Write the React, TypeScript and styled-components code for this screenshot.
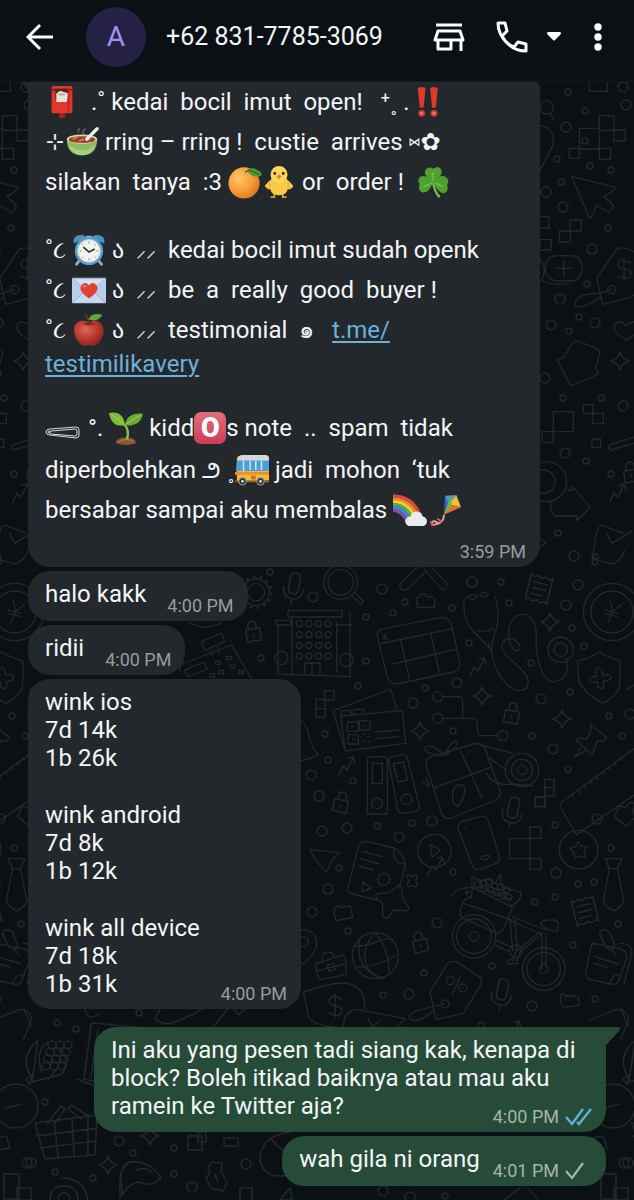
import React from "react";
import styled, { createGlobalStyle } from "styled-components";

const Global = createGlobalStyle`
  * { box-sizing: border-box; }
  body {
    margin: 0;
    background: #0b1014;
    color: #f3f5f7;
    font-family: Roboto, "Noto Sans", "DejaVu Sans", sans-serif;
  }
`;

const Screen = styled.div`
  display: flex;
  flex-direction: column;
  min-height: 100vh;
`;

const Header = styled.header`
  display: flex;
  align-items: center;
  height: 82px;
  padding: 0 4px 8px 20px;
  background: #0b1014;
  border-bottom: 1px solid #14191d;
`;

const IconButton = styled.button<{ $w: number }>`
  display: flex;
  align-items: center;
  justify-content: center;
  width: ${(p) => p.$w}px;
  height: 44px;
  padding: 0;
  border: 0;
  background: none;
  color: #fbfcfd;
  cursor: pointer;
`;

const Avatar = styled.div`
  display: flex;
  align-items: center;
  justify-content: center;
  width: 60px;
  height: 60px;
  margin: 0 20px 0 26px;
  border-radius: 50%;
  background: #252144;
  color: #a391f0;
  font-size: 28px;
  font-weight: 400;
`;

const Title = styled.h1`
  flex: 1;
  margin: 0;
  font-size: 25px;
  font-weight: 400;
  line-height: 32px;
  white-space: nowrap;
`;

const Chat = styled.main`
  position: relative;
  flex: 1;
  display: flex;
  flex-direction: column;
  gap: 4px;
  padding: 0 28px 12px;
  overflow: hidden;
`;

const Wallpaper = styled.svg`
  position: absolute;
  inset: 0;
  width: 100%;
  height: 100%;
  color: #24282c;
`;

const Bubble = styled.article<{ $out?: boolean; $wide?: boolean; $cut?: boolean; $spaced?: boolean }>`
  position: relative;
  display: flex;
  flex-wrap: wrap;
  align-self: ${(p) => (p.$out ? "flex-end" : "flex-start")};
  justify-content: flex-end;
  width: ${(p) => (p.$wide ? "100%" : "auto")};
  max-width: 512px;
  margin-top: ${(p) => (p.$spaced ? 14 : 0)}px;
  padding: ${(p) => (p.$cut ? "0 14px 4px 17px" : "9px 14px 4px 17px")};
  border-radius: ${(p) => (p.$cut ? "0 6px 22px 22px" : p.$spaced ? "22px 0 22px 22px" : "22px")};
  background: ${(p) => (p.$out ? "#274b39" : "#23282c")};
`;

const Body = styled.div<{ $fill?: boolean; $list?: boolean }>`
  display: flex;
  flex-direction: column;
  flex: ${(p) => (p.$fill ? "1 0 100%" : "0 1 auto")};
  gap: 29px;
  padding-bottom: ${(p) => (p.$list ? 7 : 0)}px;
  font-size: 24px;
  line-height: 28px;
`;

const Text = styled.p`
  margin: 0;
  white-space: pre-line;
`;

const Rows = styled.div`
  display: flex;
  flex-direction: column;
  flex: 1 0 100%;
  font-size: 24px;
`;

const Row = styled.div<{ $h?: number }>`
  display: flex;
  align-items: center;
  height: ${(p) => p.$h ?? 40}px;
  line-height: 28px;
  white-space: pre;
`;

const Link = styled.a`
  color: #6bb1dc;
  text-decoration: underline;
  text-decoration-thickness: 2px;
  text-underline-offset: 3px;
`;

const Meta = styled.span<{ $out?: boolean; $pull?: number }>`
  display: flex;
  float: right;
  align-items: center;
  align-self: flex-end;
  gap: 6px;
  height: 22px;
  margin-left: ${(p) => (p.$out ? 13 : 21)}px;
  margin-top: ${(p) => p.$pull ?? 0}px;
  color: ${(p) => (p.$out ? "#a5b5ab" : "#989c9f")};
  font-size: 18px;
  line-height: 22px;
  white-space: nowrap;
`;

const Tail = styled.svg<{ $out?: boolean }>`
  position: absolute;
  top: 0;
  ${(p) => (p.$out ? "left: 100%;" : "right: 100%;")}
  color: ${(p) => (p.$out ? "#274b39" : "#23282c")};
`;

const Pic = styled.svg`
  flex: none;
  width: 34px;
  height: 34px;
`;

const Sym = styled.span<{ $w: number; $size?: number }>`
  flex: none;
  width: ${(p) => p.$w}px;
  font-size: ${(p) => p.$size ?? 24}px;
  text-align: center;
`;

const Emoji = ({ label, children }: { label: string; children: React.ReactNode }) => (
  <Pic viewBox="0 0 36 36" role="img" aria-label={label}>
    {children}
  </Pic>
);

const Postbox = () => (
  <Emoji label="postbox">
    <rect x="15" y="28" width="6" height="7" rx="1" fill="#a32017" />
    <path d="M7 3q0-2 2-2h18q2 0 2 2v25q0 2-2 2H9q-2 0-2-2z" fill="#e2372b" />
    <path d="M7 5h22" stroke="#941b14" strokeWidth="2" />
    <rect x="11" y="4" width="14" height="11" fill="#4a2723" />
    <path d="M12 9l4-3 9 3-2 9H12z" fill="#e7e3da" />
    <path d="M14 10h7" stroke="#b7a99a" strokeWidth="2" />
    <path d="M25 4v25" stroke="#b92a21" strokeWidth="2" />
  </Emoji>
);

const Soup = () => (
  <Emoji label="bowl">
    <path d="M15 8q-3-3 1-4m4 6q-3-4 2-6" stroke="#59636b" strokeWidth="1.5" fill="none" />
    <path d="M2 15q0 17 16 17t16-17z" fill="#8cbb67" />
    <path d="M4 20q3 12 14 12t14-12q-6 7-14 7T4 20z" fill="#a8d27c" />
    <ellipse cx="18" cy="15" rx="16" ry="5" fill="#c6dfab" />
    <ellipse cx="18" cy="15.500" rx="14" ry="3.600" fill="#a63a2a" />
    <path d="M8 15l5-2m2 4l5-2m3 1l4-1" stroke="#d9784c" strokeWidth="2" />
    <path d="M23 15l11-11" stroke="#f0efec" strokeWidth="3.500" strokeLinecap="round" />
  </Emoji>
);

const Tangerine = () => (
  <Emoji label="tangerine">
    <defs>
      <radialGradient id="tang" cx=".35" cy=".35" r=".75">
        <stop offset="0" stopColor="#ffc76b" />
        <stop offset=".6" stopColor="#f69a33" />
        <stop offset="1" stopColor="#d9711c" />
      </radialGradient>
    </defs>
    <circle cx="17" cy="19" r="16.500" fill="url(#tang)" />
    <path d="M20 6q6-6 15 2 1 3-1 4-8 2-14-6z" fill="#4f9a35" />
    <path d="M18 8l4-3 11 5" stroke="#2f6d22" strokeWidth="1.500" fill="none" />
  </Emoji>
);

const Chick = () => (
  <Emoji label="chick">
    <path d="M13 30v4h-4m13-4v4h4" stroke="#dd9433" strokeWidth="2" fill="none" />
    <path d="M11 14q-5 4-8 8 2 4 6 4 1 6 9 6t9-6q5 0 6-4-4-5-8-8z" fill="#f8ca45" />
    <circle cx="18" cy="10" r="9" fill="#fbd65a" />
    <path d="M8 19q1 6-2 5m22-5q-1 6 2 5" stroke="#dfa332" fill="none" />
    <circle cx="13.500" cy="9" r="1.500" fill="#3a2413" />
    <circle cx="22.500" cy="9" r="1.500" fill="#3a2413" />
    <path d="M15 12l3-2 3 2-3 3z" fill="#e8822a" />
  </Emoji>
);

const Clover = () => (
  <Emoji label="shamrock">
    <path d="M18 17q1 11 7 17" stroke="#7fb650" strokeWidth="2.500" fill="none" />
    <g fill="#4ea02f">
      <path d="M18 18Q7 11 10 5q4-4 8-1 6-4 9 1 2 6-9 13z" />
      <path d="M18 18Q9 9 4 13q-3 4 0 7-3 7 3 9 7 1 11-11z" />
      <path d="M18 18q8-9 14-5 4 4 1 8 2 7-3 9-7 0-12-12z" />
    </g>
    <path d="M18 17V8m-1 11l-9 4m12-4l9 4" stroke="#7dc653" strokeWidth="1.200" />
  </Emoji>
);

const Bangs = () => (
  <Emoji label="double exclamation">
    <g fill="#dc3a2c">
      <path d="M2 4q0-2 4-2t4 2L8 24H4zM15 4q0-2 4-2t4 2l-2 20h-4z" />
      <circle cx="6" cy="30" r="3.600" />
      <circle cx="19" cy="30" r="3.600" />
    </g>
    <g fill="#ee8479">
      <circle cx="6" cy="30" r="1.500" />
      <circle cx="19" cy="30" r="1.500" />
    </g>
  </Emoji>
);

const Clock = () => (
  <Emoji label="alarm clock">
    <path d="M8 29l-4 5m24-5l4 5" stroke="#9aa9b3" strokeWidth="3" />
    <path d="M2 11Q0 2 10 2q4 0 5 3zM34 11q2-9-8-9-4 0-5 3z" fill="#4a91c4" />
    <path d="M15 4h6" stroke="#a9bac5" strokeWidth="2" />
    <circle cx="18" cy="19" r="15" fill="#5b9ccb" />
    <circle cx="18" cy="19" r="12" fill="#f2f1ea" stroke="#c1d5e0" />
    <path d="M12 15l6 5 6-3" stroke="#343434" strokeWidth="1.800" fill="none" />
    <path d="M18 9v2m0 16v2M8 19h2m16 0h2M11 12l1 1m12 12l1 1M25 12l-1 1M12 25l-1 1" stroke="#777" />
  </Emoji>
);

const LoveLetter = () => (
  <Emoji label="love letter">
    <rect x="0" y="5" width="36" height="27" rx="1" fill="#b8ceea" />
    <path d="M1 31l14-13h6l14 13" fill="#c8daef" stroke="#93afd3" />
    <path d="M1 6l17 15L35 6z" fill="#d5e2f3" stroke="#99b4d8" />
    <path d="M18 27Q6 19 10 13q4-5 8 0 4-5 8 0 4 6-8 14z" fill="#df4135" />
    <path d="M12 15q1-2 3-1" stroke="#f0958c" strokeWidth="1.500" fill="none" />
  </Emoji>
);

const Apple = () => (
  <Emoji label="apple">
    <defs>
      <radialGradient id="apple" cx=".4" cy=".35" r=".7">
        <stop offset="0" stopColor="#db6a54" />
        <stop offset=".55" stopColor="#ba382e" />
        <stop offset="1" stopColor="#82201d" />
      </radialGradient>
    </defs>
    <path d="M18 10Q8 5 3 13q-3 9 4 18 5 6 11 3 7 3 12-4 6-9 2-17-5-8-14-3z" fill="url(#apple)" />
    <path d="M11 11q7 4 14 0-7-2-14 0z" fill="#7b2821" />
    <path d="M18 12q-1-7-4-10" stroke="#5e3921" strokeWidth="2" fill="none" />
    <path d="M17 7q5-8 15-5-4 8-15 5z" fill="#62a63e" />
  </Emoji>
);

const Sprout = () => (
  <Emoji label="seedling">
    <path d="M7 34q1-6 11-6t11 6q-11 4-22 0z" fill="#8b5736" />
    <path d="M9 33q8-5 17-1" stroke="#b77b4e" fill="none" />
    <path d="M19 30q3-10-3-16" stroke="#8abf48" strokeWidth="2.500" fill="none" />
    <path d="M17 15Q3 18 0 2q15-3 17 13z" fill="#7ebb3b" />
    <path d="M17 15q2-14 19-12-3 14-19 12z" fill="#69aa32" />
    <path d="M2 3l14 11M34 4L18 14" stroke="#a4d75d" />
  </Emoji>
);

const ButtonO = styled.span`
  flex: none;
  width: 32px;
  height: 32px;
  border-radius: 7px;
  background: linear-gradient(#e0707c, #cf3c54);
  color: #ffffff;
  font-weight: 900;
  font-size: 27px;
  line-height: 32px;
  text-align: center;
`;

const Bus = () => (
  <Emoji label="bus">
    <path d="M2 30V7q0-4 4-4h27q3 0 3 4v22z" fill="#f2bb3a" />
    <path d="M3 9V6q1-4 5-4h24q4 0 4 4v3z" fill="#d3d8da" />
    <path d="M2 8h34v11H1z" fill="#4ca0d7" />
    <path d="M9 8v11m7-11v10m6-10v10m6-10v10" stroke="#d4e7ef" strokeWidth="1.500" />
    <path d="M0 20h36v3H0z" fill="#ef8d2c" />
    <path d="M0 29h36v2H0z" fill="#9b631f" />
    <rect x="17" y="24" width="5" height="4" fill="#b47a20" />
    <g fill="#343536" stroke="#aaa">
      <circle cx="8" cy="30" r="4" />
      <circle cx="27" cy="30" r="4" />
    </g>
    <circle cx="8" cy="30" r="1.500" fill="#ddd" />
    <circle cx="27" cy="30" r="1.500" fill="#ddd" />
  </Emoji>
);

const Rainbow = () => (
  <Emoji label="rainbow">
    <g fill="none" strokeWidth="3.200">
      <path d="M0 3q25 1 31 28" stroke="#e34632" />
      <path d="M0 6q22 1 28 25" stroke="#f08a30" />
      <path d="M0 9q19 1 25 22" stroke="#f4d13c" />
      <path d="M0 12q16 1 22 19" stroke="#57af45" />
      <path d="M0 15q13 1 19 16" stroke="#3e8ed6" />
      <path d="M0 18q10 1 16 14" stroke="#864eb4" />
    </g>
    <g fill="#e8ecf1">
      <circle cx="18" cy="30" r="5" />
      <circle cx="25" cy="26" r="6.500" />
      <circle cx="31" cy="30" r="5" />
      <rect x="16" y="29" width="17" height="6" rx="3" />
    </g>
  </Emoji>
);

const Kite = () => (
  <Emoji label="kite">
    <path d="M19 3L31 2 22 12z" fill="#3f9ad0" />
    <path d="M31 2l5 13-14-3z" fill="#f1bd38" />
    <path d="M19 3l3 9-4 11z" fill="#3564c4" />
    <path d="M26 2l-8 21 8-10z" fill="#69b946" />
    <path d="M36 15L18 23l4-11z" fill="#e9702d" />
    <path d="M22 12l-4 11 9-10z" fill="#69b946" />
    <path d="M18 23q0 8-8 10-6 2-5-2 4-3 7 2" stroke="#e0ad87" strokeWidth="2" fill="none" />
    <path d="M4 30l2 5m5-8l5 4" stroke="#d5536d" strokeWidth="2" />
  </Emoji>
);

const HairClip = () => (
  <svg width="37" height="28" viewBox="0 0 37 28" fill="none" stroke="#d8dadb" aria-hidden="true">
    <path d="M5 15l26-2q3 0 3 3v5q0 3-3 3L5 21q-4 0-4-3t4-3z" />
    <path d="M6 17l24-2q2 0 2 2v3q0 2-2 2L6 20q-3-1 0-3z" />
    <circle cx="4" cy="18" r="1" />
  </svg>
);

const Ticks = ({ read }: { read?: boolean }) => (
  <svg width="27" height="20" viewBox="0 0 27 20" fill="none" stroke={read ? "#63b2dc" : "#a5b5ab"} strokeWidth="2.200" aria-label={read ? "Read" : "Sent"}>
    <path d="M1 10l6 7L18 2" />
    {read && <path d="M12 15l2 2L26 2" />}
  </svg>
);

const SMALL = [
  [366, 617], [393, 613], [405, 602], [452, 608], [501, 582], [509, 603], [469, 643], [366, 661], [358, 686],
  [425, 688], [453, 731], [531, 663], [572, 628], [584, 646], [570, 692], [609, 716], [622, 736], [532, 736],
  [568, 769], [325, 734], [328, 760], [353, 781], [377, 826], [412, 823], [339, 868], [348, 931], [453, 872],
  [535, 902], [555, 897], [578, 884], [594, 882], [555, 825], [611, 848], [618, 924], [573, 945], [492, 966],
  [424, 973], [383, 995], [595, 999], [568, 92], [585, 111], [557, 159], [590, 166], [611, 170], [561, 182],
  [608, 228], [587, 284], [579, 317], [569, 331], [563, 398], [601, 398], [586, 461], [611, 474], [585, 141],
  [595, 557], [558, 533], [261, 658], [57, 1023], [76, 1029], [45, 1102], [174, 1148], [133, 1153], [55, 1172],
  [93, 1178], [174, 1174], [270, 572], [139, 1013], [481, 1025], [595, 562], [445, 1196],
];
const MEDIUM = [
  [313, 597], [382, 589], [472, 582], [578, 585], [566, 605], [413, 703], [457, 683], [553, 749], [311, 775],
  [630, 714], [319, 796], [322, 831], [347, 828], [399, 837], [432, 821], [597, 819], [556, 873], [328, 889],
  [312, 912], [437, 923], [409, 994], [532, 1006], [626, 105], [566, 127], [546, 192], [563, 207], [592, 249],
  [560, 299], [595, 323], [551, 325], [545, 378], [623, 406], [565, 453], [574, 556], [623, 87], [119, 1141],
  [31, 1163], [192, 1187], [246, 1164], [383, 1191], [624, 1163], [541, 699], [410, 1197],
];

const Sparkle = ({ x, y }: { x: number; y: number }) => (
  <path transform={`translate(${x} ${y})`} d="M0-9Q2-2 9 0 2 2 0 9-2 2-9 0-2-2 0-9z" />
);
const Lock = ({ x, y, r }: { x: number; y: number; r: number }) => (
  <path transform={`translate(${x} ${y}) rotate(${r})`} d="M-7-3H7V9H-7zM-4-3v-4q0-4 4-4t4 4v4M0 2v2" />
);
const Mic = ({ x, y, r }: { x: number; y: number; r: number }) => (
  <path transform={`translate(${x} ${y}) rotate(${r})`} d="M-5-8q0-5 5-5t5 5V3q0 5-5 5t-5-5zM-10 2q0 11 10 11T10 2M0 13v5" />
);
const Receipt = ({ x, y, r }: { x: number; y: number; r: number }) => (
  <path transform={`translate(${x} ${y}) rotate(${r})`} d="M-11-13l3 2 4-2 4 2 4-2 4 2 3-2V13l-3-2-4 2-4-2-4 2-4-2-3 2zM-7-6H7M-7 0H7M-7 6H5" />
);
const Zig = ({ x, y }: { x: number; y: number }) => <path transform={`translate(${x} ${y})`} d="M-7 9l4-9 4 4 6-12m-5 0l5-1 2 6" />;

const Doodles = () => (
  <g id="doodles" fill="none" stroke="currentColor" strokeWidth="1.500" strokeLinejoin="round" strokeLinecap="round">
    {SMALL.map(([x, y], i) => (
      <circle key={i} cx={x} cy={y} r="3" />
    ))}
    {MEDIUM.map(([x, y], i) => (
      <circle key={i} cx={x} cy={y} r="5" />
    ))}
    <Sparkle x={550} y={622} />
    <Sparkle x={482} y={696} />
    <Sparkle x={420} y={731} />
    <Sparkle x={562} y={719} />
    <Sparkle x={620} y={361} />
    <Sparkle x={108} y={1165} />
    <Sparkle x={150} y={1136} />
    <Lock x={512} y={714} r={10} />
    <Lock x={253} y={632} r={-10} />
    <Lock x={341} y={803} r={12} />
    <Lock x={420} y={943} r={-15} />
    <Lock x={631} y={473} r={-10} />
    <Mic x={294} y={586} r={10} />
    <Mic x={513} y={810} r={12} />
    <Mic x={502} y={992} r={10} />
    <Receipt x={539} y={589} r={14} />
    <Receipt x={585} y={911} r={-14} />
    <Zig x={477} y={667} />
    <Zig x={346} y={766} />
    <Zig x={435} y={866} />
    <Zig x={512} y={1030} />
    <Zig x={617} y={493} />

    <g transform="translate(540 80) scale(.33333)" strokeWidth="4">
      <path d="M148-10v44h54v-44M118 145h60v62h-60zM178 107h44v44h-44zM222 150h34v33h-34zM88 205h30v30H88zM178 205h34v33h-34z" />
      <path d="M95 289l132 33q-6 14-36 27l30 28-14 22-38-24-14 38q-8 2-11-7z" />
      <path d="M90 420h34v33H90zM58 453h33v33H58zM-20 410h47v34h-47zM0 479h34v31H0z" />
      <path d="M16 565q0-38 40-38h34q36 0 36 38t-36 38H60q-44 0-44-38zM50 565h44M71 542v46M0 540q24 26 5 60 40 20 80 10" />
      <path d="M170 595l58-86q20-12 50 4l60 30-10 80-62 30-78 20zM215 629L178 640q-72 0-73 35 10 20 76-24M252 534v66M270 548q-36-18-36 6 0 10 20 12 20 2 18 18-4 18-38 6" />
      <circle cx="215" cy="629" r="12" />
      <circle cx="20" cy="82" r="20" />
      <path d="M30 100l10 18M0 137q50 10 38 60L0 272" />
      <path d="M259 780q-45-24-35-48 18-16 35 6 18-22 38-4 6 22-38 46z" />
      <path d="M52 838l18-5 28-43q8-12 24-4l48 20q12 6 8 18l-12 42 10 16-77 33q-8 2-12-6z" />
      <path d="M40 995h60v60H40zM6 1055h34v32H6zM130 974h28v27h-28zM158 1000h32v31h-32zM156 1077h26v25h-26z" />
      <path d="M282 1072l-70 22q-14 8 0 16l78-22" />
      <circle cx="20" cy="1205" r="60" />
      <circle cx="10" cy="1205" r="35" />
      <path d="M82 1230h16v-10l52 62-40 40v-14H45q-14-5-14-42" />
      <path d="M250 1360l-62-24q-14 0-20 30l-10 60q2 14 60 26 30-14 36-40M200 1360l15 30 60-36" />
      <path d="M-10 1370l28 18-30 22" />
    </g>

    <g transform="translate(300 560) scale(.33333)" strokeWidth="4">
      <circle cx="122" cy="67" r="51" />
      <circle cx="122" cy="67" r="38" />
      <path d="M156 107l26 26 9-9-26-26M300 72l70-70M320 90l58-56M374 28l52 60q16 0 14-18L385 10M300 72q-4 20 20 18" />
      <path d="M350 112l10-2v-8h16l4 8h18l6 8v24h-52z" />
      <path d="M240 208l184-36q26 0 32 28l24 110q0 18-20 26l-170 36q-20 0-28-20l-30-124q0-14 8-20zM237 252l222-46M302 240l26 116M392 220l26 118M278 312l190-44M246 224l16 14m-12 2l8-20" />
      <path d="M504 110q-16 6-12 40 2 30 20 55l62 65q4-34 18-75 6-60-8-84M530 210q26 10 50-4M508 116q-6-12 8-12t14 6q-4 10-22 6zM540 106q0-10 14-8t10 8q-10 8-24 0zM566 262v-14M574 270q10 78 64 118 50 14 46-30-8-24-60-66-22-24-18-38 6-22 32-18 26 16 22 32-16 10-26-10-12-20-6-56 10-44 50-38 36 14 30 80 8 130 60 120 44-8 30-70" />
      <circle cx="782" cy="269" r="38" />
      <circle cx="782" cy="269" r="20" />
      <circle cx="936" cy="156" r="86" />
      <circle cx="936" cy="156" r="63" />
      <path d="M930 120l8 34-14 34M964 134l-26 20M916 150l38 10M914 160l38 10" />
      <path d="M833 302q40-8 64-26 34 20 62 26 4 60-3 86-20 30-48 42-40-20-68-58-8-30-7-70zM888 330q10-14 18 0l2 16 18-2q12 8 2 16l-18 4 2 16q-8 10-18 2l-2-16-18 2q-12-8-2-16l18-4z" />
      <path d="M136 573L98 452l174-64 20 64M122 468l184-16 12 98-182 23zM142 486h33v28h-33zM178 482h32v28h-32zM144 524h31v28h-31zM226 516l70-6M230 536l66-6M124 466l2-14h26l4 12M160 464l2-16h28l4 14M154 500h6m30-4h6m-38 42h6m24-16h6m8 8h6m-20 14h6m10 2h4" />
      <circle cx="413" cy="410" r="15" />
      <circle cx="413" cy="475" r="15" />
      <circle cx="608" cy="527" r="15" />
      <path d="M428 410h48q12 0 12 14v52M428 475h90q14 0 14 16v20q0 16 16 16h45" />
      <path d="M872 492l48 42-12 10-16-2-16 42-48-45 14-6 16 6 14-24zM842 564q-10 20-20 28l34-20" />
      <path d="M1010 560L780 730q-4 8 50 94L1010 700M800 750" />
      <path d="M816 705l6 8m12-22l6 8m12-22l6 8m12-22l6 8m12-22l6 8m12-22l6 8m12-22l6 8m12-22l6 8m12-22l6 8" />
      <path d="M202 762V602q0-12 12-12h36q12 0 12 12v160zM217 610h30v60h-30zM266 604q0-12 12-14l30-6q12 0 14 10l35 140q2 20-10 20l-42 6q-8 0-12-12zM280 612l30-6 12 54-28 6z" />
      <circle cx="231" cy="730" r="16" />
      <circle cx="320" cy="718" r="16" />
      <path d="M380 620q-6-20 8-28l132-40q22-6 34 10l46 130q4 18-16 30l-130 52q-20 6-30-14zM482 574l64 140M402 684l170-62M436 586q-60 0-62-22 10-20 62 22zM438 584q10-40 34-40 6 14-34 40M460 730q-10-60 30-56 14 24-16 66z" />
      <circle cx="666" cy="630" r="50" />
      <circle cx="666" cy="630" r="32" />
      <circle cx="666" cy="630" r="14" />
      <path d="M548 556l92 24M570 596l48 34M560 640q20 40 80 32l60 6" />
      <path d="M734 658h28v50h-28zM734 683h28M706 710h28v30h-28zM74 392h28v28H74zM48 418h28v54H48zM48 446h28" />
      <path d="M0 480q20 14 26 40 4 34 28 64-20 14-54 18M366 664l20 16-6-26M1010 370l-30 18" />
    </g>

    <g transform="translate(0 565) scale(.33333)" strokeWidth="4">
      <circle cx="768" cy="82" r="26" />
      <circle cx="768" cy="82" r="40" />
      <circle cx="768" cy="82" r="47" strokeWidth="6" strokeDasharray="9 12" strokeLinecap="butt" />
      <path d="M866 136h160v20H866q-6-10 0-20zM828 166h44v14h-44zM876 158v168M834 182v145l216 8V142M1012 180h46M914 326v-32h46v34M936 296v30M1010 170v152" />
      <circle cx="844" cy="279" r="20" />
      <circle cx="1039" cy="285" r="20" />
      {[176, 209, 241, 273].map((y) => [898, 927, 956, 984].map((x) => <circle key={`${x}-${y}`} cx={x} cy={y} r="9" />))}
      <path d="M540 320q-6-20 14-26l140-54 60 100M604 230l60-26 10 26-60 26zM630 256l8 18M652 246l8 18M552 316l60-24 10 20-58 24zM646 288h14v10h-14zM680 274h14v10h-14zM656 316h14v10h-14zM690 300h14v10h-14zM630 326h14v10h-14zM716 316h14v10h-14z" />
      <path d="M570 172q40 30 96 0" />
    </g>

    <g transform="translate(300 790) scale(.33333)" strokeWidth="4">
      <path d="M30 178l88 10-24 24-14 34q-40-36-50-68z" />
      <path d="M230 330l-74-18q-14-4-12-20l30-118q6-20 26-20l82 20q30 16 34 52l-18 68M282 176q-8 40 32 46M188 184l58 16M182 206l58 16M176 228l44 12M188 276l26 18-28 10z" />
      <circle cx="251" cy="268" r="18" />
      <path d="M292 288q8-8 12 6l4 34 18 24q4 12-14 10l-30-2-16 22q-14 8-18-6v-34l-20-20q-4-10 10-12l30-2z" />
      <path d="M102 356l10-8 14 4 26-4 6 34-48 10q-8-6-8-36zM322 262q-2-12 14-2 16-12 16 2-8 10 0 20 0 14-16 4-14 10-14-4 8-10 0-20z" />
      <circle cx="403" cy="183" r="50" />
      <path d="M390 164l32 16-26 22z" />
      <path d="M484 96l54-16q18-4 26 10l34 110q4 14-10 20l-50 18q-14 4-20-8L474 114q0-12 10-18zM494 113h2M540 206q4-10 28-10-4 20-28 10z" />
      <path d="M629 146h61v60h-61zM690 111h33v34h-33zM690 206h33v32h-33zM690 146v60M706 22h30v28h-30z" />
      <circle cx="836" cy="179" r="58" />
      <path d="M834 154l8 14 20 2-10 14 4 18-18-4-14 8-2-18-12-14 18-4z" />
      <path d="M916 206h50l-14 30h-24zM928 236l-18 98q10 20 32 28 20-8 30-28l-20-98" />
      <path d="M944 76l14-28 20 4q12-24 24-10l-4 30M944 80l36 30 20-24" />
      <circle cx="226" cy="497" r="69" />
      <path d="M226 428q-50 54-22 108 24 26 50 28M226 428q40 50 42 120M160 470q50-4 78-18 28-8 40-4M166 530q50 8 130-38M180 448q-20 80 60 116" />
      <path d="M46 522l84-28q8 0 8 56-10 8-76 18-10 0-16-46zM68 510q-6-24 14-24t20 16M52 542l82-20M82 526l18-6 6 18-20 6zM-10 420q60-6 60 40 0 30-40 62l-20-20" />
      <circle cx="10" cy="455" r="15" />
      <circle cx="522" cy="439" r="65" />
      <circle cx="522" cy="439" r="52" />
      <circle cx="522" cy="439" r="14" />
      <circle cx="731" cy="537" r="64" />
      <circle cx="731" cy="537" r="50" />
      <circle cx="731" cy="537" r="13" />
      <path d="M454 316q20-24 64-24l120 60-24 56q-14 30-30 18l-100-44q-10-20 8-50l20-14M492 340l144 50M518 292l-6 34M516 288v-28l28 14 20-8 22 14 16-28 2 38 60 18q-4 34-38 40M540 290l88 36M725 430V536M738 430V530M628 390l96 42M638 380l98 40M630 394l8 88M644 388l8 90M650 484l70-58M670 478l60-50M588 452l50 20M586 466l40 18M722 402q0-14 40-12 20 4 10 34-30 0-50-22M634 508q-20 4-6 14l26-2M650 476l-12 36M664 480l-14 34" />
      <circle cx="648" cy="484" r="19" />
      <circle cx="501" cy="308" r="4" />
      {[[532, 284], [550, 278], [568, 276], [584, 288], [602, 290], [620, 300], [590, 308], [608, 318], [572, 300], [552, 296], [626, 322]].map(([x, y]) => (
        <circle key={`${x}-${y}`} cx={x} cy={y} r="9" />
      ))}
      <path d="M390 606l50-82q14-16 34-6l60 40q18 12 6 30l-50 82-82 18zM434 642l-36 8q-72 14-70 34 14 24 76-24M480 560l-22 52" />
      <circle cx="435" cy="642" r="12" />
      <circle cx="451" cy="572" r="12" />
      <circle cx="488" cy="594" r="12" />
      <path d="M782 614l10-4 4 8h20l18 2 4 26-46 6q-12-4-10-38z" />
      <path d="M880 460l80 16q24 8 20 30l-24 66q-6 14-24 10l-64-14q-14-8-10-24l14-70q2-12 8-14zM930 580q4-26 30-26M960 460q36 0 36 30l-24 90M884 500l70 22M882 520l40 12M898 430q8-20 30-4l16 40q-10 20-26 6zM936 480l14 16" />
      <path d="M10 606q110-36 140-24 48 16 44 74M10 606l16 76q20 28 100 30M130 710q0-46 40-52l146 28-34 34M106 612v70M124 628q-20-18-34-4-8 20 16 24 22 4 20 20-12 18-38 0M204 686l14 24 24-20" />
      <path d="M870 690l80-32q30 0 36 30l-24 60M962 656l24 56" />
    </g>

    <path d="M91 1025q0-2 3-2l50 5M91 1025l-7 54 12 3M98 1030l-7 48M77 1079l15 6" />
    <path d="M32 1078q-14-20 6-38l-6 42 30-8q10-16-4-24M30 1085l-4-6 6-4zM42 1072q-8-20 6-30m8 28l-8 10" />
    {[0, 1, 2, 3].map((r) => [0, 1, 2].map((c) => <circle key={`${r}-${c}`} cx={46 + c * 8 + r * 2} cy={1066 - r * 7} r="4" />))}
    <path d="M35 1123l62-8-2 40-50 4zM36 1136l62-8M40 1148l56-7M54 1121l4 36M72 1119l2 37M88 1117v38M47 1124l14-18 4 3-10 14M90 1117l-19-12-3 4 14 10" />
    <path d="M122 1186q-6-14 8-24 20-2 31 16-10 10-22 4-12 2-17 14zM120 1198q-2-40 14-36M136 1170q10-4 16 2" />
    <path d="M208 1167l4-5 10 1-1 8 6 12-4 8-12-3-5-10 4-6zM215 1174l3 8" />
    <path d="M290 1132q-30 4-30 28 4 20 30 15M272 1140l14 14M188 1136h14v14h-14zM198 1132h8v10h-8zM224 1138h14v8h-14zM4 1174h15v25H4zM19 1188h12v12H19zM240 1188h12v14h-12z" />
    <path d="M50 1200q0-14 14-14t14 14M58 1200q0-7 6-7t6 7M62 1178q22 0 26 22" />
    <path d="M290 1188l-10 12h12zM520 1188l-18 14M528 1188l14 16M614 1187v14h14" />
    <path d="M213 1027l18-22 8 10 14-14 10 6M160 1010q-12 12 10 14l24-10 12-8M85 1008q2 14 14 6" />
    <circle cx="16" cy="1106" r="22" />
    <path d="M6 1108l16-4M-4 1138l10-2 4 12-12 2" />
  </g>
);

export default function App() {
  return (
    <Screen>
      <Global />
      <Header>
        <IconButton $w={40} aria-label="Back">
          <svg width="28" height="28" viewBox="0 0 28 28" fill="none" stroke="currentColor" strokeWidth="3">
            <path d="M14 2L2 14l12 12M2 14h25" />
          </svg>
        </IconButton>
        <Avatar>A</Avatar>
        <Title>+62 831-7785-3069</Title>
        <IconButton $w={66} aria-label="Catalog">
          <svg width="32" height="28" viewBox="0 0 32 28" fill="none" stroke="currentColor" strokeWidth="3">
            <path d="M3 2h26M5 8h22l3 9H2zM5 17v9h13v-9M28 16v12" strokeLinejoin="round" />
          </svg>
        </IconButton>
        <IconButton $w={60} aria-label="Call">
          <svg width="32" height="32" viewBox="0 0 32 32" fill="none" stroke="currentColor" strokeWidth="3" strokeLinejoin="round">
            <path d="M2 2h7l2 8-5 5q4 8 12 11l4-5 8 2v7Q19 30 11 22 2 13 2 2z" />
          </svg>
        </IconButton>
        <IconButton $w={24} aria-label="Call options">
          <svg width="14" height="9" viewBox="0 0 14 9" fill="currentColor">
            <path d="M1 0h12q2 1 0 3L8 8q-1 1-2 0L1 3Q-1 1 1 0z" />
          </svg>
        </IconButton>
        <IconButton $w={64} aria-label="More">
          <svg width="8" height="28" viewBox="0 0 8 28" fill="currentColor">
            <circle cx="4" cy="4" r="3.700" />
            <circle cx="4" cy="14" r="3.700" />
            <circle cx="4" cy="24" r="3.700" />
          </svg>
        </IconButton>
      </Header>
      <Chat>
        <Wallpaper aria-hidden="true">
          <g transform="translate(0 -82)">
            <Doodles />
            <use href="#doodles" x="-597" />
            <use href="#doodles" x="597" />
          </g>
        </Wallpaper>

        <Bubble $wide $cut>
          <Tail width="7" height="9" viewBox="0 0 7 9">
            <path d="M0 0h7v9z" fill="currentColor" />
          </Tail>
          <Rows>
            <Row><Postbox />{"  .˚ kedai  bocil  imut  open!   ⁺˳ . "}<Bangs /></Row>
            <Row><Sym $w={20} $size={22}>⊹</Sym><Soup />{" rring – rring !  custie  arrives "}<Sym $w={12} $size={12}>⋈</Sym>{" "}<Sym $w={20} $size={24}>✿</Sym></Row>
            <Row>{"silakan  tanya  :3 "}<Tangerine /><Chick />{" or  order !  "}<Clover /></Row>
            <Row $h={28} />
            <Row>{"˚૮ "}<Clock />{" ა  "}<Sym $w={20} $size={20}>⸝⸝</Sym>{"  kedai bocil imut sudah openk"}</Row>
            <Row>{"˚૮ "}<LoveLetter />{" ა  "}<Sym $w={20} $size={20}>⸝⸝</Sym>{"  be  a  really  good  buyer !"}</Row>
            <Row>{"˚૮ "}<Apple />{" ა  "}<Sym $w={20} $size={20}>⸝⸝</Sym>{"  testimonial  ๑   "}<Link href="https://t.me/testimilikavery">t.me/</Link></Row>
            <Row $h={28}><Link href="https://t.me/testimilikavery">testimilikavery</Link></Row>
            <Row $h={28} />
            <Row $h={44}><HairClip />{" °. "}<Sprout />{" kidd"}<ButtonO>O</ButtonO>{"s note  ..  spam  tidak"}</Row>
            <Row>{"diperbolehkan ౨ "}<Sym $w={8} $size={24}>˳</Sym><Bus />{" jadi  mohon  ‘tuk"}</Row>
            <Row>{"bersabar sampai aku membalas "}<Rainbow /><Kite /></Row>
          </Rows>
          <Meta $pull={11}>3:59 PM</Meta>
        </Bubble>

        <Bubble>
          <Body><Text>halo kakk</Text></Body>
          <Meta $pull={15}>4:00 PM</Meta>
        </Bubble>
        <Bubble>
          <Body><Text>ridii</Text></Body>
          <Meta $pull={15}>4:00 PM</Meta>
        </Bubble>
        <Bubble>
          <Body $list>
            <Text>{"wink ios\n7d 14k\n1b 26k"}</Text>
            <Text>{"wink android\n7d 8k\n1b 12k"}</Text>
            <Text>{"wink all device\n7d 18k\n1b 31k"}</Text>
          </Body>
          <Meta>4:00 PM</Meta>
        </Bubble>
        <Bubble $out $wide $spaced>
          <Tail $out width="14" height="18" viewBox="0 0 14 18">
            <path d="M0 0h11q5 0 2 4L0 18z" fill="currentColor" />
          </Tail>
          <Body $fill>
            <Text>
              Ini aku yang pesen tadi siang kak, kenapa di block? Boleh itikad baiknya atau mau aku ramein ke Twitter aja?
              <Meta $out $pull={14}>4:00 PM<Ticks read /></Meta>
            </Text>
          </Body>
        </Bubble>
        <Bubble $out>
          <Body><Text>wah gila ni orang</Text></Body>
          <Meta $out $pull={15}>4:01 PM<Ticks /></Meta>
        </Bubble>
      </Chat>
    </Screen>
  );
}
